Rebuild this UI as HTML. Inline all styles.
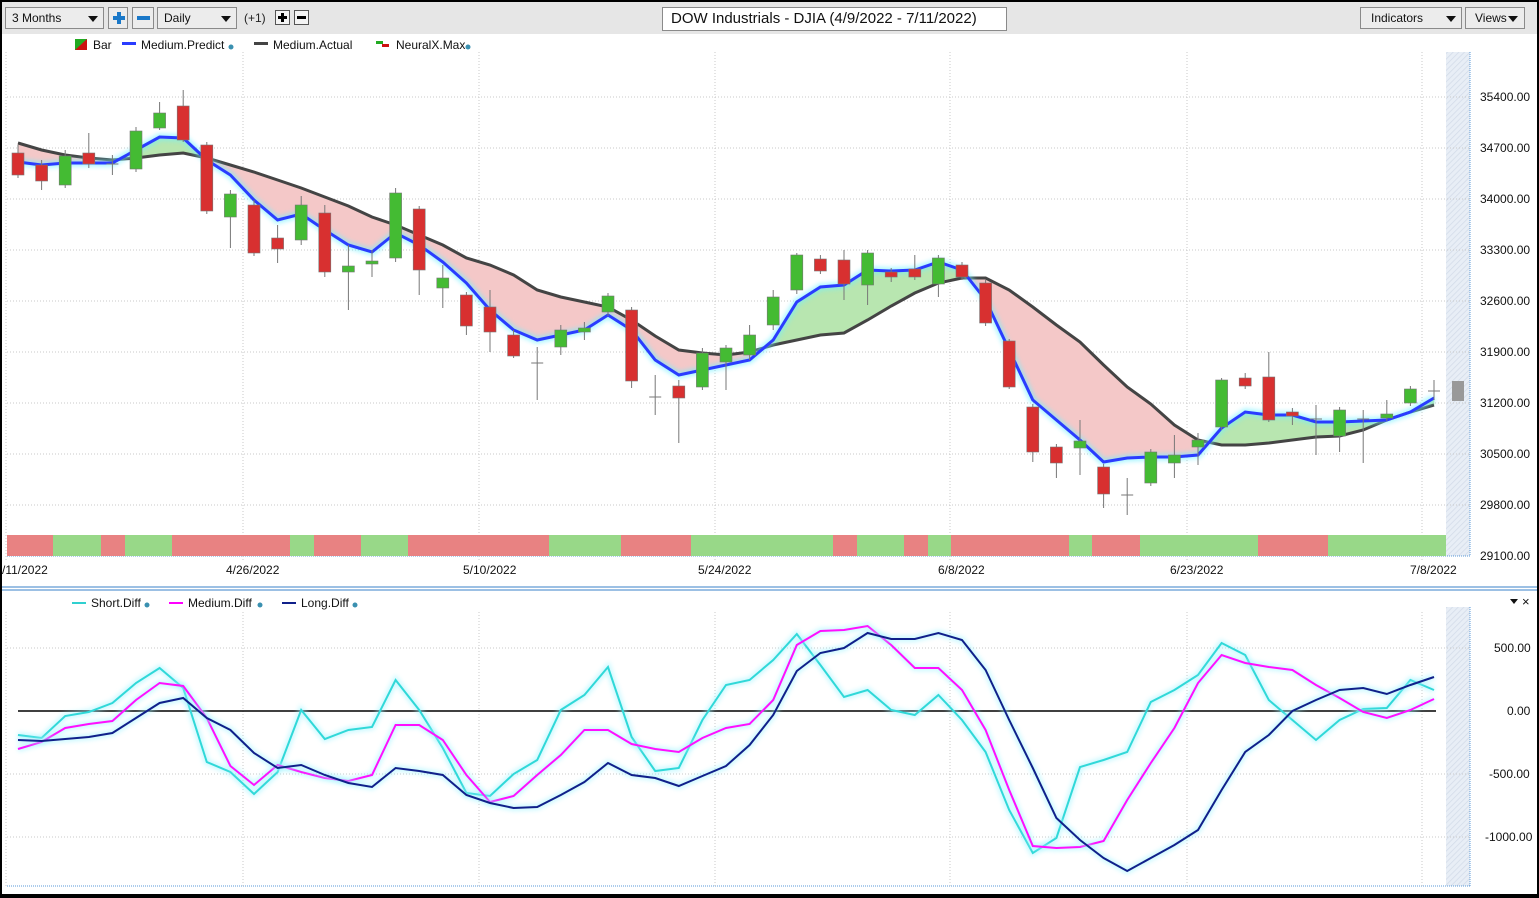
<!DOCTYPE html>
<html><head><meta charset="utf-8"><style>
body{margin:0;width:1539px;height:898px;overflow:hidden;background:#000;font-family:"Liberation Sans",sans-serif;}
#w{position:absolute;left:2px;top:2px;width:1535px;height:892px;background:#fff;}
.tb{position:absolute;left:0;top:0;width:1535px;height:32px;background:#e6e6e6;}
.bx{position:absolute;border:1px solid #8a8a8a;background:#ececec;font-size:12px;line-height:20px;padding-left:6px;box-sizing:border-box;height:22px;top:5px;color:#111;}
.arr{position:absolute;right:5px;top:8px;width:0;height:0;border-left:5px solid transparent;border-right:5px solid transparent;border-top:6px solid #111;}
svg text{font-family:"Liberation Sans",sans-serif;}
</style></head><body><div id="w">
<div class="tb">
<div class="bx" style="left:3px;width:99px;">3 Months<div class="arr"></div></div>
<div class="bx" style="left:106px;width:20px;padding:0;"><svg width="20" height="20"><rect x="4" y="8" width="12" height="4" fill="#1a78c8"/><rect x="8" y="4" width="4" height="12" fill="#1a78c8"/></svg></div>
<div class="bx" style="left:130px;width:22px;padding:0;"><svg width="20" height="20"><rect x="4" y="8" width="13" height="4" fill="#1a78c8"/></svg></div>
<div class="bx" style="left:155px;width:80px;">Daily<div class="arr"></div></div>
<div style="position:absolute;left:242px;top:6px;font-size:12px;line-height:20px;color:#222">(+1)</div>
<div style="position:absolute;left:273px;top:8px;width:15px;height:15px;border:1px solid #555;background:#f4f4f4;box-sizing:border-box"><svg width="13" height="13"><rect x="2" y="5" width="9" height="3"/><rect x="5" y="2" width="3" height="9"/></svg></div>
<div style="position:absolute;left:292px;top:8px;width:15px;height:15px;border:1px solid #555;background:#f4f4f4;box-sizing:border-box"><svg width="13" height="13"><rect x="2" y="5" width="9" height="3"/></svg></div>
<div class="bx" style="left:660px;top:5px;width:345px;height:24px;background:#fff;font-size:15px;line-height:22px;padding-left:8px;">DOW Industrials - DJIA (4/9/2022 - 7/11/2022)</div>
<div class="bx" style="left:1358px;width:102px;padding-left:10px;">Indicators<div class="arr"></div></div>
<div class="bx" style="left:1463px;width:60px;padding-left:9px;">Views<div class="arr" style="right:6px"></div></div>
</div>
<svg id="s" width="1535" height="892" viewBox="2 2 1535 892" style="position:absolute;left:0;top:0">
<defs>
<pattern id="h" width="4" height="4" patternUnits="userSpaceOnUse" patternTransform="rotate(45)"><rect width="4" height="4" fill="#e8eef6"/><line x1="0" y1="0" x2="0" y2="4" stroke="#d2dbe8" stroke-width="1.5"/></pattern>
<filter id="gl" x="-5%" y="-5%" width="110%" height="110%"><feGaussianBlur stdDeviation="2.5"/></filter>
</defs>
<g id="g"></g>
<g font-size="12" fill="#111">
<rect x="75" y="39" width="12" height="11" fill="#cc1111"/><polygon points="75,39 87,39 75,50" fill="#22aa22"/>
<text x="93" y="49">Bar</text>
<rect x="122" y="42" width="14" height="3" fill="#2a3cff"/><text x="141" y="49">Medium.Predict</text><circle cx="231" cy="47" r="2.5" fill="#3a90b0"/>
<rect x="254" y="42" width="14" height="3" fill="#444"/><text x="273" y="49">Medium.Actual</text>
<rect x="376" y="41" width="7" height="3" fill="#22aa22"/><rect x="382" y="44" width="7" height="3" fill="#cc1111"/><text x="396" y="49">NeuralX.Max</text><circle cx="468" cy="47" r="2.5" fill="#3a90b0"/>
<rect x="72" y="602" width="14" height="2" fill="#30d0d0"/><text x="91" y="607">Short.Diff</text><circle cx="147" cy="605" r="2.5" fill="#3a90b0"/>
<rect x="169" y="602" width="14" height="2" fill="#ff00ff"/><text x="188" y="607">Medium.Diff</text><circle cx="260" cy="605" r="2.5" fill="#3a90b0"/>
<rect x="282" y="602" width="14" height="2" fill="#10208a"/><text x="301" y="607">Long.Diff</text><circle cx="355" cy="605" r="2.5" fill="#3a90b0"/>
<text x="1480" y="101">35400.00</text><text x="1480" y="152">34700.00</text><text x="1480" y="203">34000.00</text><text x="1480" y="254">33300.00</text><text x="1480" y="305">32600.00</text><text x="1480" y="356">31900.00</text><text x="1480" y="407">31200.00</text><text x="1480" y="458">30500.00</text><text x="1480" y="509">29800.00</text><text x="1480" y="560">29100.00</text>
<text x="2" y="574">/11/2022</text><text x="226" y="574">4/26/2022</text><text x="463" y="574">5/10/2022</text><text x="698" y="574">5/24/2022</text><text x="938" y="574">6/8/2022</text><text x="1170" y="574">6/23/2022</text><text x="1410" y="574">7/8/2022</text>
<text x="1494" y="652">500.00</text><text x="1507" y="715">0.00</text><text x="1489" y="778">-500.00</text><text x="1485" y="841">-1000.00</text>
<polygon points="1510,599 1518,599 1514,604" fill="#111"/><text x="1522" y="606" font-size="13">×</text>
</g>
</svg>
</div>
<script>
var g=document.getElementById('g'),h='';
function X(i){return 18+23.6*i;}
// panels
h+='<rect x="1446" y="52" width="24" height="504" fill="url(#h)"/><rect x="1446" y="607" width="24" height="279" fill="url(#h)"/>';
h+='<line x1="1470" y1="52" x2="1470" y2="556" stroke="#5a9ad8" stroke-dasharray="1,1"/><line x1="7" y1="556" x2="1470" y2="556" stroke="#5a9ad8" stroke-dasharray="1,1"/>';
h+='<line x1="1470" y1="607" x2="1470" y2="886" stroke="#5a9ad8" stroke-dasharray="1,1"/><line x1="7" y1="886" x2="1470" y2="886" stroke="#5a9ad8" stroke-dasharray="1,1"/>';
h+='<line x1="2" y1="587" x2="1537" y2="587" stroke="#3a80c8"/><line x1="2" y1="590" x2="1537" y2="590" stroke="#3a80c8"/>';
[97,148,199,250,301,352,403,454,505].forEach(function(y){h+='<line x1="7" y1="'+y+'" x2="1470" y2="'+y+'" stroke="#c8c8c8" stroke-dasharray="1,2"/>';});
[648,774,837].forEach(function(y){h+='<line x1="7" y1="'+y+'" x2="1470" y2="'+y+'" stroke="#c8c8c8" stroke-dasharray="1,2"/>';});
[6,243,479,715,950,1187,1422].forEach(function(x){h+='<line x1="'+x+'" y1="52" x2="'+x+'" y2="560" stroke="#c8c8c8" stroke-dasharray="1,2"/><line x1="'+x+'" y1="612" x2="'+x+'" y2="886" stroke="#c8c8c8" stroke-dasharray="1,2"/>';});
// color bar
var seg=[[7,53,0],[53,101,1],[101,125,0],[125,172,1],[172,290,0],[290,314,1],[314,361,0],[361,408,1],[408,549,0],[549,621,1],[621,691,0],[691,833,1],[833,857,0],[857,904,1],[904,928,0],[928,951,1],[951,1069,0],[1069,1092,1],[1092,1140,0],[1140,1258,1],[1258,1328,0],[1328,1446,1]];
seg.forEach(function(s){h+='<rect x="'+s[0]+'" y="535" width="'+(s[1]-s[0])+'" height="21" fill="'+(s[2]?'#98d888':'#e88282')+'"/>';});
var P=[162,165,163,163,163,150,137,138,160,175,200,220,214,230,245,252,233,245,262,283,310,330,340,335,330,315,330,360,375,370,365,360,340,302,287,285,270,271,270,262,270,300,350,400,420,440,462,458,457,457,455,428,412,415,415,422,422,421,420,412,398];
var A=[143,150,155,158,160,158,155,153,158,165,172,180,188,197,206,217,225,235,245,258,265,275,290,297,302,307,320,336,350,353,355,352,345,340,335,333,320,306,293,283,278,278,290,307,325,342,365,387,404,425,440,445,445,443,440,437,436,430,420,412,405];
for(var i=0;i<60;i++){var m=(P[i]+P[i+1])-(A[i]+A[i+1]);
h+='<polygon points="'+X(i)+','+P[i]+' '+X(i+1)+','+P[i+1]+' '+X(i+1)+','+A[i+1]+' '+X(i)+','+A[i]+'" fill="'+(m>0?'#f4c8c8':'#b8e6b0')+'" stroke="'+(m>0?'#f4c8c8':'#b8e6b0')+'" stroke-width="0.5"/>';}
// candles [bodyTop,bodyBot,wickTop,wickBot,color]
var C=[[153,175,145,178,'r'],[165,181,160,190,'r'],[156,185,150,188,'g'],[153,164,133,168,'r'],[164,166,155,175,'c'],[131,169,127,172,'g'],[113,128,102,130,'g'],[106,140,90,142,'r'],[145,211,142,214,'r'],[194,217,190,248,'g'],[205,253,200,256,'r'],[238,249,225,263,'r'],[205,240,196,245,'g'],[213,272,205,277,'r'],[266,272,245,310,'g'],[261,264,250,277,'g'],[193,258,188,262,'g'],[209,270,206,295,'r'],[278,288,265,308,'g'],[295,326,292,335,'r'],[307,332,290,352,'r'],[335,356,330,358,'r'],[363,367,347,400,'c'],[330,347,325,355,'g'],[328,332,322,340,'g'],[296,312,293,316,'g'],[310,381,307,388,'r'],[397,399,375,415,'c'],[386,398,380,443,'r'],[353,387,348,390,'g'],[348,362,345,390,'g'],[335,355,325,360,'g'],[297,325,290,330,'g'],[255,290,253,294,'g'],[259,271,255,274,'r'],[260,284,250,300,'r'],[253,285,250,305,'g'],[272,277,268,282,'r'],[269,277,255,280,'r'],[258,284,255,297,'g'],[265,277,262,280,'r'],[283,323,280,326,'r'],[341,387,339,389,'r'],[407,452,404,462,'r'],[447,463,444,478,'r'],[441,448,420,475,'g'],[467,494,464,508,'r'],[495,497,478,515,'c'],[452,483,449,486,'g'],[455,463,435,478,'g'],[440,447,433,465,'g'],[380,427,378,430,'g'],[378,386,373,389,'r'],[377,420,352,422,'r'],[412,416,408,425,'r'],[419,421,405,455,'c'],[410,436,407,452,'g'],[419,421,410,463,'c'],[414,418,400,421,'g'],[389,403,386,406,'g'],[391,393,380,400,'c']];
// lines with glow
function pl(arr,f){var s='';for(var i=0;i<arr.length;i++)s+=X(i)+','+f(arr[i])+' ';return s;}
var id=function(v){return v;};
var S=[735,738,716,712,703,683,668,688,762,772,794,772,710,739,730,727,680,710,748,793,796,774,760,710,695,667,737,771,768,720,685,680,660,634,665,697,690,710,715,695,720,752,810,853,838,767,760,752,702,690,675,643,655,700,720,740,720,709,708,680,690];
var M=[749,742,728,724,721,700,683,686,718,766,785,765,772,778,781,775,725,725,740,775,802,796,775,755,730,730,744,749,752,738,728,724,700,645,631,630,626,645,668,668,690,730,790,846,848,847,841,800,763,728,683,655,663,667,670,685,698,712,718,710,699];
var L=[740,741,739,737,733,718,703,698,718,730,753,768,765,775,783,787,768,771,775,795,803,808,807,795,782,763,775,778,786,776,766,745,715,671,653,648,633,639,639,633,640,670,720,768,818,840,858,871,858,845,830,790,752,735,711,700,690,688,694,685,677];
h+='<polyline points="'+pl(A,id)+'" fill="none" stroke="#444" stroke-width="3"/>';
h+='<polyline points="'+pl(P,id)+'" fill="none" stroke="#70f0ff" stroke-width="7" opacity="0.6" filter="url(#gl)"/>';
h+='<polyline points="'+pl(P,id)+'" fill="none" stroke="#2a3cff" stroke-width="3"/>';
C.forEach(function(c,i){var x=X(i),col=c[4]=='r'?'#d83030':c[4]=='g'?'#44bb33':'#777';
h+='<line x1="'+x+'" y1="'+c[2]+'" x2="'+x+'" y2="'+c[3]+'" stroke="#777" stroke-width="1"/>';
if(c[4]=='c')h+='<line x1="'+(x-6)+'" y1="'+c[0]+'" x2="'+(x+6)+'" y2="'+c[0]+'" stroke="#777"/>';
else h+='<rect x="'+(x-6)+'" y="'+c[0]+'" width="12" height="'+(c[1]-c[0])+'" fill="'+col+'" stroke="#777" stroke-width="0.6"/>';});
h+='<rect x="1452" y="381" width="12" height="20" fill="#999"/>';
h+='<line x1="18" y1="711" x2="1436" y2="711" stroke="#000" stroke-width="1.5"/>';
[[S,'#30d8d8'],[M,'#ff10ff'],[L,'#10208a']].forEach(function(q){
h+='<polyline points="'+pl(q[0],id)+'" fill="none" stroke="#9ff4ff" stroke-width="6" opacity="0.55" filter="url(#gl)"/>';
h+='<polyline points="'+pl(q[0],id)+'" fill="none" stroke="'+q[1]+'" stroke-width="2"/>';});
g.innerHTML=h;
</script>
</body></html>
